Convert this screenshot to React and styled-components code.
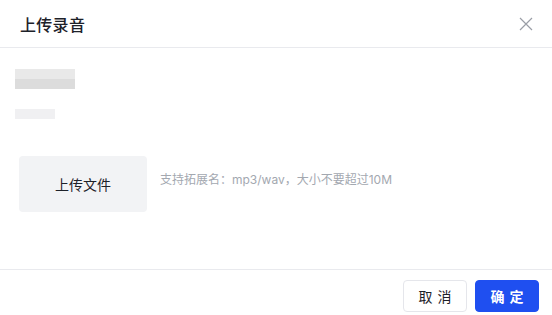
import React from 'react';
import styled, { createGlobalStyle } from 'styled-components';

const GlobalStyle = createGlobalStyle`
  html, body {
    margin: 0;
    padding: 0;
    background: #fff;
    font-family: "Inter", "Noto Sans CJK SC", "Noto Sans", sans-serif;
  }
`

const Modal = styled.div`
  width: 552px;
  height: 315px;
  display: flex;
  flex-direction: column;
  background: #fff;
  box-sizing: border-box;
`

const Header = styled.div`
  height: 48px;
  box-sizing: border-box;
  border-bottom: 1px solid #e9eaee;
  display: flex;
  align-items: center;
  justify-content: space-between;
  padding: 0 19px 0 20px;
`

const Title = styled.div`
  font-size: 16px;
  font-weight: 500;
  color: #1d2129;
  letter-spacing: 0.3px;
`

const Close = styled.button`
  border: none;
  background: none;
  padding: 0;
  width: 14px;
  height: 14px;
  display: flex;
  cursor: pointer;
`

const Body = styled.div`
  flex: 1;
  padding: 21px 15px 0 15px;
  display: flex;
  flex-direction: column;
`

const Blur = styled.div`
  width: ${p => p.w}px;
  height: ${p => p.h}px;
  margin-bottom: ${p => p.mb || 0}px;
  background: ${p => p.bg};
  filter: blur(0.6px);
`

const UploadRow = styled.div`
  display: flex;
  align-items: flex-start;
  gap: 13px;
  padding-left: 4px;
  margin-top: 37px;
`

const UploadButton = styled.button`
  width: 128px;
  height: 56px;
  border: none;
  border-radius: 4px;
  background: #f2f3f5;
  color: #1d2129;
  font-family: inherit;
  font-size: 14px;
  cursor: pointer;
`

const Hint = styled.div`
  font-size: 12px;
  color: #a3a8b0;
  margin-top: 14px;
`

const Footer = styled.div`
  height: 46px;
  box-sizing: border-box;
  border-top: 1px solid #e9eaee;
  display: flex;
  justify-content: flex-end;
  align-items: flex-start;
  gap: 8px;
  padding: 10px 13px 0 0;
`

const Btn = styled.button`
  width: 64px;
  height: 32px;
  box-sizing: border-box;
  border-radius: 4px;
  font-family: inherit;
  font-size: 14px;
  letter-spacing: 5px;
  padding: 0 0 0 5px;
  cursor: pointer;
  border: 1px solid ${p => (p.primary ? '#1f4ff0' : '#e5e6eb')};
  background: ${p => (p.primary ? '#1f4ff0' : '#fff')};
  color: ${p => (p.primary ? '#fff' : '#1d2129')};
  font-weight: ${p => (p.primary ? 600 : 400)};
`

const App = () => {
  return (
    <>
      <GlobalStyle />
      <Modal>
        <Header>
          <Title>上传录音</Title>
          <Close>
            <svg width="14" height="14" viewBox="0 0 14 14">
              <path d="M1 1L13 13M13 1L1 13" stroke="#9a9ea6" strokeWidth="1.2" fill="none" />
            </svg>
          </Close>
        </Header>
        <Body>
          <Blur w={60} h={20} mb={20} bg="linear-gradient(180deg, #e9e9e9 0%, #e9e9e9 50%, #dcdcdc 50%, #dcdcdc 100%)" />
          <Blur w={40} h={10} bg="#f0f0f2" />
          <UploadRow>
            <UploadButton>上传文件</UploadButton>
            <Hint>支持拓展名：mp3/wav，大小不要超过10M</Hint>
          </UploadRow>
        </Body>
        <Footer>
          <Btn>取消</Btn>
          <Btn primary>确定</Btn>
        </Footer>
      </Modal>
    </>
  )
}

export default App
